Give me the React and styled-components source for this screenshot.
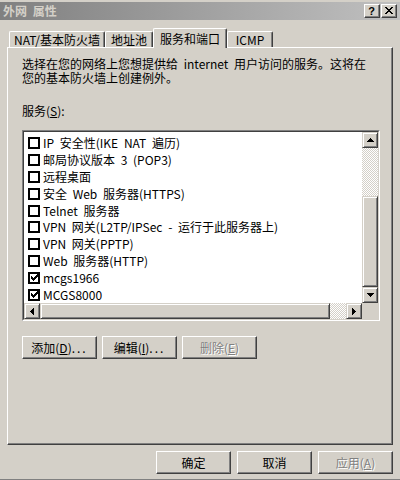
import React from "react";
import styled, { createGlobalStyle } from "styled-components";

const FONT = `"Noto Sans CJK SC", "Liberation Sans", sans-serif`;
const FACE = "#d4d0c8";

const Global = createGlobalStyle`
  html, body { margin: 0; padding: 0; background: ${FACE}; overflow: hidden; }
  body { font-family: ${FONT}; font-size: 12px; color: #000; }
  * { box-sizing: border-box; }
`;

const Window = styled.div`
  width: 400px;
  height: 480px;
  background: ${FACE};
  padding-top: 2px;
  border-bottom: 1px solid #808080;
  display: flex;
  flex-direction: column;
`;

const TitleBar = styled.div`
  height: 18px;
  display: flex;
  align-items: center;
  justify-content: space-between;
  padding: 0 3px;
  background: linear-gradient(to right, #808080, #c0c0c0);
`;

const Title = styled.div`
  color: ${FACE};
  font-weight: bold;
  font-size: 12px;
  line-height: 18px;
  word-spacing: 3px;
`;

const CaptionButtons = styled.div`
  display: flex;
  gap: 1px;
`;

const CapBtn = styled.div`
  width: 16px;
  height: 14px;
  background: ${FACE};
  border: 1px solid;
  border-color: #fff #404040 #404040 #fff;
  box-shadow: inset -1px -1px #808080;
  display: flex;
  align-items: center;
  justify-content: center;
  font-family: "Liberation Sans", sans-serif;
  font-weight: bold;
  font-size: 11px;
  line-height: 12px;
  padding: 0 1px 1px 0;
`;

const Body = styled.div`
  padding: 8px 7px 0 7px;
  display: flex;
  flex-direction: column;
`;

const TabStrip = styled.div`
  height: 19px;
  display: flex;
  align-items: flex-end;
  padding-left: 2px;
  position: relative;
  z-index: 1;
`;

const Tab = styled.div`
  width: ${(p) => p.$w}px;
  height: ${(p) => (p.$active ? 20 : 16)}px;
  margin-bottom: ${(p) => (p.$active ? -1 : 0)}px;
  background: ${FACE};
  border-top: 1px solid #fff;
  border-left: 1px solid #fff;
  border-right: 1px solid #404040;
  box-shadow: inset -1px 0 #808080;
  border-radius: 2px 2px 0 0;
  display: flex;
  align-items: center;
  justify-content: center;
  font-size: 12px;
  line-height: 14px;
  white-space: nowrap;
  padding-top: ${(p) => (p.$active ? 0 : 1)}px;
`;

const Panel = styled.div`
  height: 398px;
  border-top: 1px solid #fff;
  border-left: 1px solid #fff;
  border-right: 1px solid #404040;
  border-bottom: 1px solid #404040;
  box-shadow: inset -1px -1px #808080;
  padding: 9px 14px 0 14px;
  display: flex;
  flex-direction: column;
  align-items: flex-start;
`;

const Description = styled.p`
  margin: 0;
  line-height: 14px;
  font-size: 12px;
  word-spacing: 3px;
`;

const Label = styled.div`
  margin-top: 19px;
  line-height: 14px;
`;

const U = styled.span`
  text-decoration: underline;
`;

const ListBox = styled.div`
  margin-top: 12px;
  width: 358px;
  height: 191px;
  border: 2px solid;
  border-color: #808080 #fff #fff #808080;
  display: grid;
  grid-template-columns: 338px 16px;
  grid-template-rows: 171px 16px;
  position: relative;
  &::before {
    content: "";
    position: absolute;
    inset: -1px;
    border: 1px solid;
    border-color: #404040 ${FACE} ${FACE} #404040;
    pointer-events: none;
  }
`;

const Rows = styled.div`
  background: #fff;
  overflow: hidden;
  padding-top: 3px;
`;

const Row = styled.div`
  height: 16.8px;
  display: flex;
  align-items: center;
  gap: 3px;
  padding-left: 4px;
  white-space: nowrap;
  line-height: 14px;
  word-spacing: 3px;
`;

const Check = styled.span`
  flex: none;
  width: 12px;
  height: 12px;
  border: 2px solid #000;
  background: #fff;
  display: flex;
  align-items: center;
  justify-content: center;
`;

const Dither = `repeating-conic-gradient(#fff 0% 25%, ${FACE} 0% 50%) 0 0 / 2px 2px`;

const VScroll = styled.div`
  display: flex;
  flex-direction: column;
`;

const HScroll = styled.div`
  display: flex;
`;

const Track = styled.div`
  flex: ${(p) => p.$size}px 0 0;
  background: ${Dither};
`;

const Raised = styled.div`
  flex: ${(p) => p.$size || 16}px 0 0;
  width: ${(p) => (p.$vertical ? "16px" : "auto")};
  height: ${(p) => (p.$vertical ? "auto" : "16px")};
  background: ${FACE};
  border: 1px solid;
  border-color: ${FACE} #404040 #404040 ${FACE};
  box-shadow: inset 1px 1px #fff, inset -1px -1px #808080;
  display: flex;
  align-items: center;
  justify-content: center;
`;

const Corner = styled.div`
  background: ${FACE};
`;

const ButtonRow = styled.div`
  margin-top: 15px;
  display: flex;
  gap: 5px;
`;

const PushButton = styled.button`
  width: 75px;
  height: 23px;
  padding: 0;
  background: ${FACE};
  border: 1px solid;
  border-color: #fff #404040 #404040 #fff;
  box-shadow: inset -1px -1px #808080;
  font-family: ${FONT};
  font-size: 12px;
  line-height: 14px;
  color: ${(p) => (p.disabled ? "#808080" : "#000")};
  text-shadow: ${(p) => (p.disabled ? "1px 1px 0 #fff" : "none")};
  white-space: nowrap;
`;

const Dots = styled.span`
  letter-spacing: 2px;
`;

const Footer = styled.div`
  display: flex;
  justify-content: flex-end;
  gap: 6px;
  padding: 6px 7px 0 0;
`;

const Px = ({ w, h, d }) => (
  <svg width={w} height={h} viewBox={`0 0 ${w} ${h}`} shapeRendering="crispEdges">
    <path d={d} fill="#000" />
  </svg>
);

const ARROWS = {
  up: { w: 7, h: 4, d: "M3 0h1v1H3z M2 1h3v1H2z M1 2h5v1H1z M0 3h7v1H0z" },
  down: { w: 7, h: 4, d: "M0 0h7v1H0z M1 1h5v1H1z M2 2h3v1H2z M3 3h1v1H3z" },
  left: { w: 4, h: 7, d: "M3 0h1v7H3z M2 1h1v5H2z M1 2h1v3H1z M0 3h1v1H0z" },
  right: { w: 4, h: 7, d: "M0 0h1v7H0z M1 1h1v5H1z M2 2h1v3H2z M3 3h1v1H3z" },
};

const Arrow = ({ dir }) => <Px {...ARROWS[dir]} />;

const CheckMark = () => (
  <Px
    w={7}
    h={7}
    d="M0 2h1v3H0z M1 3h1v3H1z M2 4h1v3H2z M3 3h1v3H3z M4 2h1v3H4z M5 1h1v3H5z M6 0h1v3H6z"
  />
);

const CloseGlyph = () => (
  <Px
    w={8}
    h={7}
    d="M0 0h2v1H0z M6 0h2v1H6z M1 1h2v1H1z M5 1h2v1H5z M2 2h4v1H2z M3 3h2v1H3z M2 4h4v1H2z M1 5h2v1H1z M5 5h2v1H5z M0 6h2v1H0z M6 6h2v1H6z"
  />
);

const services = [
  { name: "IP 安全性(IKE NAT 遍历)", on: false },
  { name: "邮局协议版本 3 (POP3)", on: false },
  { name: "远程桌面", on: false },
  { name: "安全 Web 服务器(HTTPS)", on: false },
  { name: "Telnet 服务器", on: false },
  { name: "VPN 网关(L2TP/IPSec - 运行于此服务器上)", on: false },
  { name: "VPN 网关(PPTP)", on: false },
  { name: "Web 服务器(HTTP)", on: false },
  { name: "mcgs1966", on: true },
  { name: "MCGS8000", on: true },
];

const tabs = [
  { label: "NAT/基本防火墙", w: 96 },
  { label: "地址池", w: 48 },
  { label: "服务和端口", w: 74, active: true },
  { label: "ICMP", w: 46 },
];

export default function App() {
  return (
    <>
      <Global />
      <Window>
        <TitleBar>
          <Title>外网 属性</Title>
          <CaptionButtons>
            <CapBtn>?</CapBtn>
            <CapBtn>
              <CloseGlyph />
            </CapBtn>
          </CaptionButtons>
        </TitleBar>
        <Body>
          <TabStrip>
            {tabs.map((t) => (
              <Tab key={t.label} $w={t.w} $active={t.active}>
                {t.label}
              </Tab>
            ))}
          </TabStrip>
          <Panel>
            <Description>
              选择在您的网络上您想提供给 internet 用户访问的服务。这将在
              <br />
              您的基本防火墙上创建例外。
            </Description>
            <Label>
              服务(<U>S</U>):
            </Label>
            <ListBox>
              <Rows>
                {services.map((s) => (
                  <Row key={s.name}>
                    <Check>{s.on && <CheckMark />}</Check>
                    <span>{s.name}</span>
                  </Row>
                ))}
              </Rows>
              <VScroll>
                <Raised $vertical>
                  <Arrow dir="up" />
                </Raised>
                <Track $size={48} />
                <Raised $vertical $size={91} />
                <Raised $vertical>
                  <Arrow dir="down" />
                </Raised>
              </VScroll>
              <HScroll>
                <Raised $size={16}>
                  <Arrow dir="left" />
                </Raised>
                <Raised $size={290} />
                <Track $size={16} />
                <Raised $size={16}>
                  <Arrow dir="right" />
                </Raised>
              </HScroll>
              <Corner />
            </ListBox>
            <ButtonRow>
              <PushButton>
                添加(<U>D</U>)<Dots>...</Dots>
              </PushButton>
              <PushButton>
                编辑(<U>I</U>)<Dots>...</Dots>
              </PushButton>
              <PushButton disabled>
                删除(<U>E</U>)
              </PushButton>
            </ButtonRow>
          </Panel>
        </Body>
        <Footer>
          <PushButton>确定</PushButton>
          <PushButton>取消</PushButton>
          <PushButton disabled>
            应用(<U>A</U>)
          </PushButton>
        </Footer>
      </Window>
    </>
  );
}
